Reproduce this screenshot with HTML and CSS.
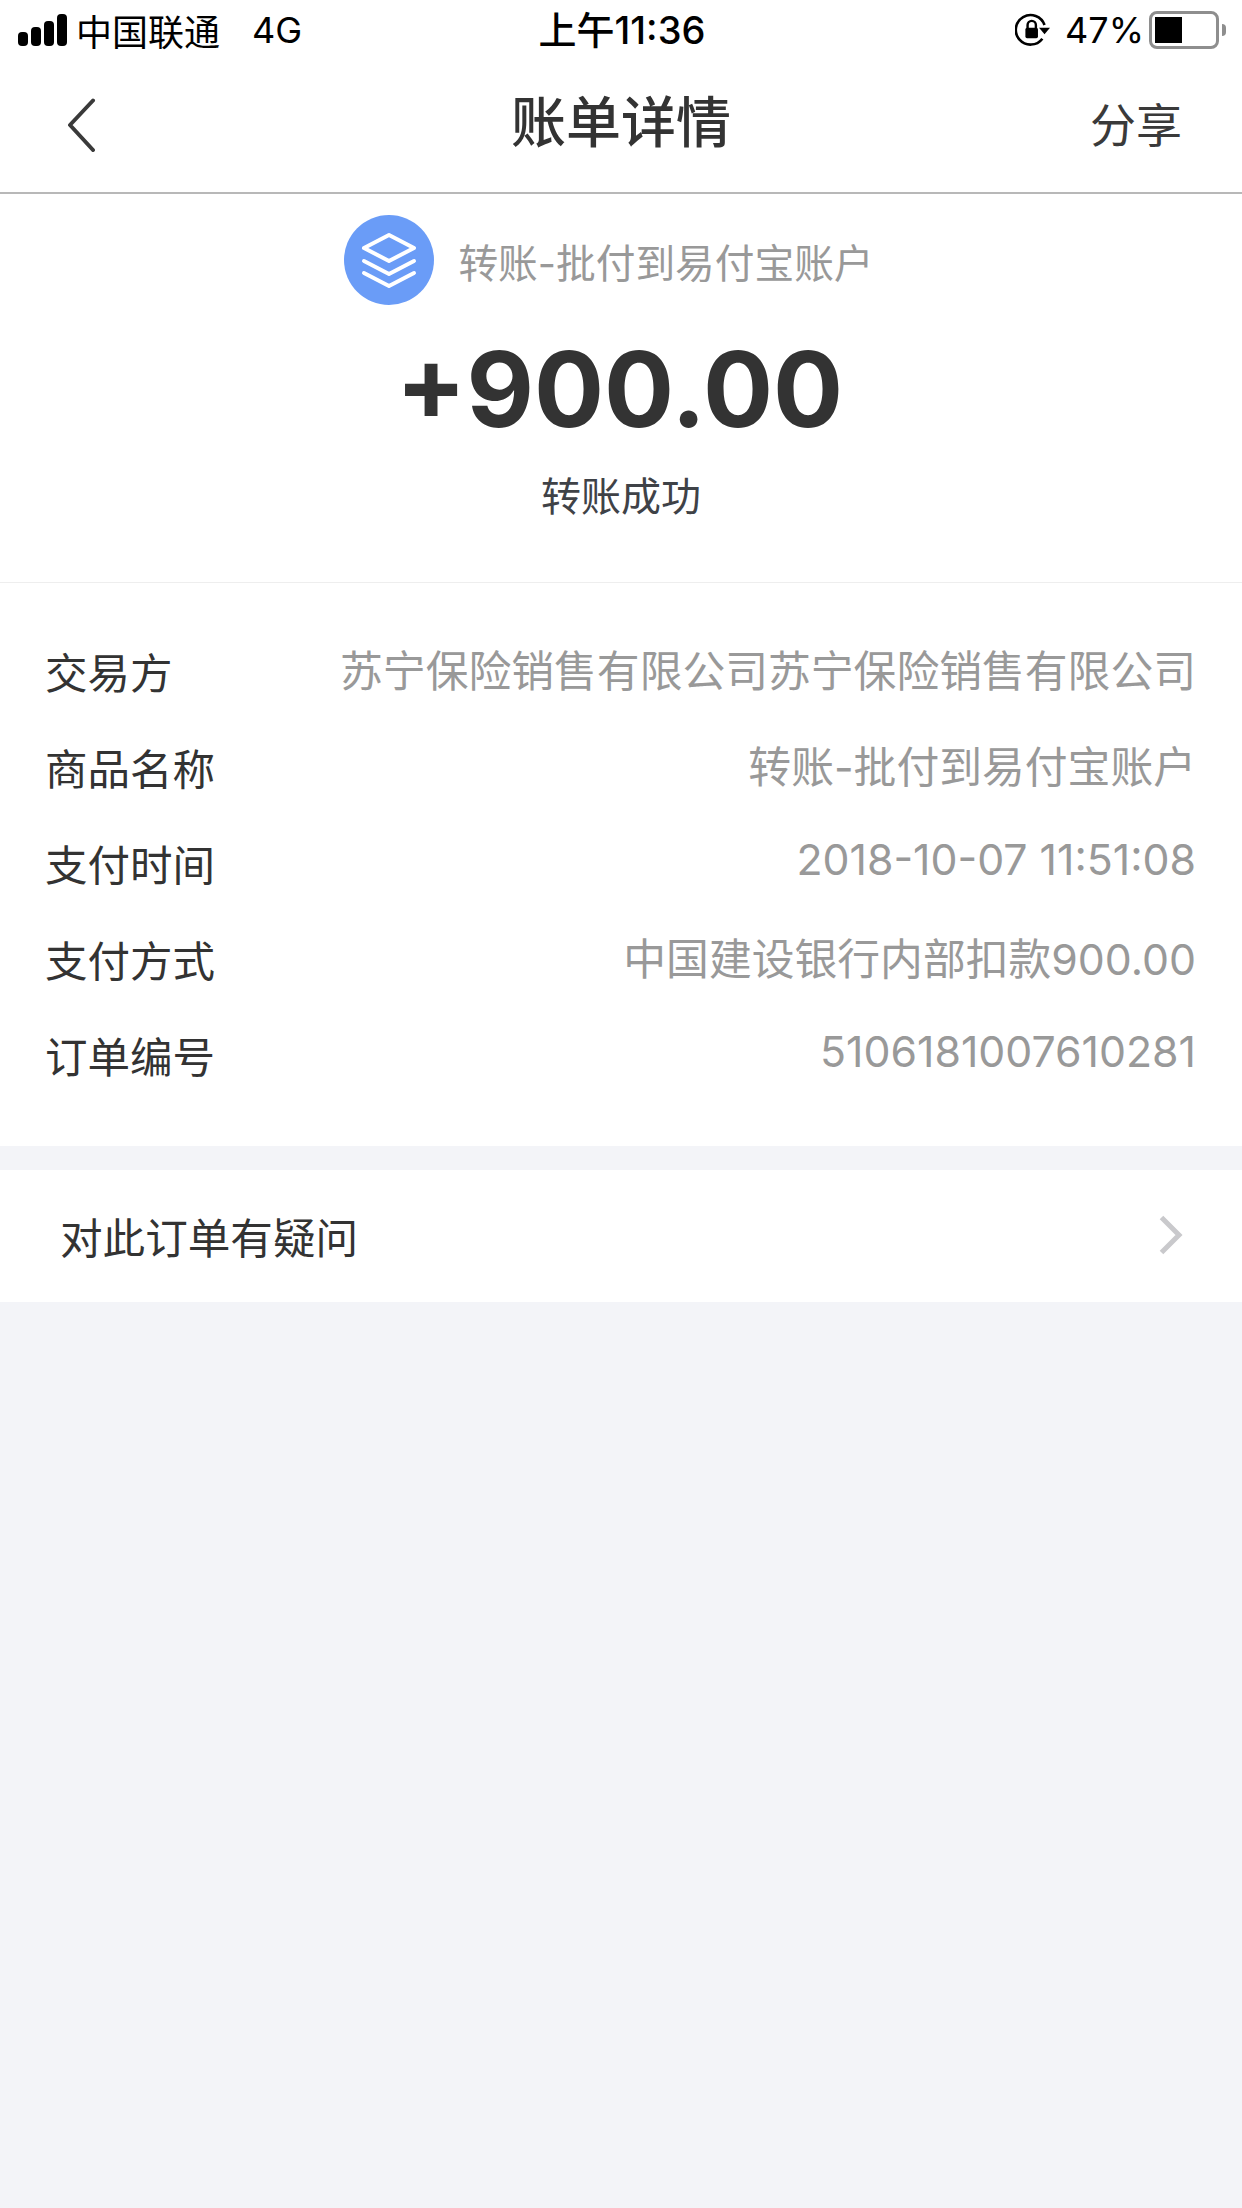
FILE: index.html
```html
<!DOCTYPE html>
<html lang="zh-CN">
<head>
  <meta charset="UTF-8" />
  <meta name="viewport" content="width=device-width, initial-scale=1.0"/>
  <title>账单详情</title>
  <link rel="stylesheet" href="styles.css">
</head>
<body>
  <div class="status-bar">
    <div class="status-left">
      <svg class="signal" width="50" height="32" viewBox="0 0 50 32">
        <rect x="0" y="18" width="10" height="14" rx="4"/>
        <rect x="13" y="13" width="10" height="19" rx="4"/>
        <rect x="26" y="7" width="10" height="25" rx="4"/>
        <rect x="39" y="0" width="10" height="32" rx="4"/>
      </svg>
      <span class="carrier">中国联通</span>
      <span class="network">4G</span>
    </div>
    <div class="status-time">上午11:36</div>
    <div class="status-right">
      <svg class="rotate-lock" width="35" height="35" viewBox="0 0 32 32">
        <path d="M25 23.500A13.500 13.500 0 1 1 27 11" fill="none" stroke="#000" stroke-width="2.400"/>
        <path d="M22 13.500h10l-5 6z" fill="#000"/>
        <path d="M11.500 14v-3a3.800 3.800 0 0 1 7.600 0v3" fill="none" stroke="#000" stroke-width="2.200"/>
        <rect x="9.500" y="13.500" width="11.500" height="9.500" rx="1.500" fill="#000"/>
      </svg>
      <span class="battery-text">47%</span>
      <div class="battery"><div class="battery-fill"></div></div>
      <div class="battery-tip"></div>
    </div>
  </div>

  <header class="nav">
    <svg class="nav-back" width="30" height="54" viewBox="0 0 30 54">
      <path d="M26 2.500 3 27l23 25" fill="none" stroke="#3a3a3a" stroke-width="4" stroke-linecap="round" stroke-linejoin="round"/>
    </svg>
    <h1>账单详情</h1>
    <span class="nav-share">分享</span>
  </header>

  <section class="summary">
    <div class="summary-title">
      <svg class="type-icon" width="90" height="90" viewBox="0 0 90 90">
        <circle cx="45" cy="45" r="45" fill="#6a9cf7"/>
        <path d="M45 20 70 33 45 46 20 33z" fill="none" stroke="#fff" stroke-width="4" stroke-linejoin="round"/>
        <path d="M20 46 45 59 70 46M20 58 45 71 70 58" fill="none" stroke="#fff" stroke-width="4" stroke-linecap="round" stroke-linejoin="round"/>
      </svg>
      <span>转账-批付到易付宝账户</span>
    </div>
    <div class="amount">+900.00</div>
    <div class="result">转账成功</div>
  </section>

  <section class="details">
    <div class="detail-row"><span class="detail-label">交易方</span><span class="detail-value">苏宁保险销售有限公司苏宁保险销售有限公司</span></div>
    <div class="detail-row"><span class="detail-label">商品名称</span><span class="detail-value">转账-批付到易付宝账户</span></div>
    <div class="detail-row"><span class="detail-label">支付时间</span><span class="detail-value">2018-10-07 11:51:08</span></div>
    <div class="detail-row"><span class="detail-label">支付方式</span><span class="detail-value">中国建设银行内部扣款900.00</span></div>
    <div class="detail-row"><span class="detail-label">订单编号</span><span class="detail-value">5106181007610281</span></div>
  </section>

  <div class="question">
    <span>对此订单有疑问</span>
    <svg width="24" height="40" viewBox="0 0 24 40">
      <path d="M2.500 2.500 20 20 2.500 37.500" fill="none" stroke="#c9c9cc" stroke-width="5"/>
    </svg>
  </div>
</body>
</html>
```
FILE: styles.css
```css
body {
  margin: 0;
  min-height: 2208px;
  background-color: #f3f4f8;
  font-family: Inter, "Noto Sans CJK SC", sans-serif;
  color: #333;
}

.status-bar {
  height: 60px;
  background-color: #fff;
  color: #000;
  display: grid;
  grid-template-columns: 1fr auto 1fr;
  align-items: center;
  padding: 0 16px 0 18px;
  box-sizing: border-box;
  font-size: 36px;
}

.status-left {
  display: flex;
  align-items: center;
}

.carrier {
  margin-left: 8px;
}

.network {
  margin-left: 32px;
}

.status-time {
  font-size: 38px;
  font-weight: 500;
  line-height: 56px;
}

.status-right {
  display: flex;
  align-items: center;
  justify-content: flex-end;
}

.battery-text {
  margin-left: 15px;
  margin-right: 5px;
}

.battery {
  width: 58px;
  height: 26px;
  border: 3px solid #8e8e8e;
  border-radius: 8px;
  padding: 3px;
}

.battery-fill {
  width: 47%;
  height: 100%;
  background-color: #000;
}

.battery-tip {
  width: 4px;
  height: 12px;
  margin-left: 3px;
  background-color: #8e8e8e;
  border-radius: 0 4px 4px 0;
}

.nav {
  height: 134px;
  box-sizing: border-box;
  background-color: #fff;
  border-bottom: 2px solid #b8b8b8;
  display: flex;
  align-items: center;
  justify-content: space-between;
  padding: 0 60px 2px 67px;
  position: relative;
}

.nav h1 {
  position: absolute;
  left: 0;
  right: 0;
  top: 24px;
  margin: 0;
  text-align: center;
  font-size: 55px;
  font-weight: 500;
  line-height: 76px;
  color: #333;
  pointer-events: none;
}

.nav-share {
  font-size: 46px;
  line-height: 60px;
  color: #3a3a3a;
}

.summary {
  height: 389px;
  box-sizing: border-box;
  background-color: #fff;
  border-bottom: 1px solid #eee;
  padding-top: 21px;
  text-align: center;
}

.summary-title {
  display: flex;
  align-items: center;
  justify-content: center;
  gap: 24px;
  padding-right: 24px;
  font-size: 39.700px;
  color: #999;
}

.amount {
  font-size: 104px;
  font-weight: 700;
  line-height: 130px;
  margin-top: 19px;
  margin-left: -3px;
  color: #333;
}

.result {
  font-size: 40px;
  color: #3f4247;
  margin-top: 11px;
}

.details {
  background-color: #fff;
  padding: 39px 46px 0 45px;
  height: 563px;
  box-sizing: border-box;
}

.detail-row {
  height: 96px;
  display: flex;
  align-items: center;
  justify-content: space-between;
}

.detail-label {
  font-size: 42.500px;
  color: #333;
}

.detail-value {
  font-size: 42.800px;
  color: #999;
  margin-top: -5px;
}

.question {
  margin-top: 24px;
  height: 132px;
  box-sizing: border-box;
  padding: 0 59px 2px 60px;
  background-color: #fff;
  display: flex;
  align-items: center;
  justify-content: space-between;
  font-size: 42.600px;
  color: #333;
}
```
